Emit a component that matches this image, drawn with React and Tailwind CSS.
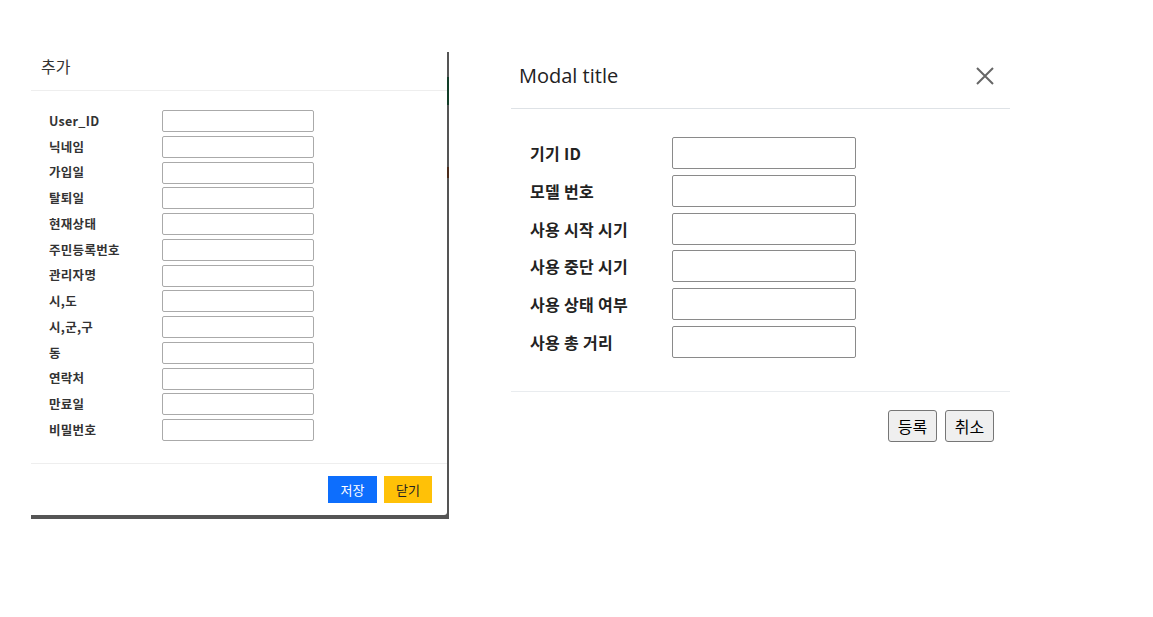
import React from "react";

const leftLabels = ["User_ID","닉네임","가입일","탈퇴일","현재상태","주민등록번호","관리자명","시,도","시,군,구","동","연락처","만료일","비밀번호"];
const rightLabels = ["기기 ID","모델 번호","사용 시작 시기","사용 중단 시기","사용 상태 여부","사용 총 거리"];

const kr = { fontFamily: '"Noto Sans CJK KR", "Noto Sans", sans-serif' };

export default function App() {
  return (
    <div className="w-[1153px] h-[617px] bg-white flex items-start pl-[31px] pt-[46px] gap-[62px]" style={kr}>
      {/* Left modal */}
      <div className="mt-[6px] relative w-[418px] h-[467px] bg-[#555555] pr-[2px] pb-[4px]">
        <span className="absolute right-0 top-[25px] w-[2px] h-[28px] bg-[#123d28]" />
        <span className="absolute right-0 top-[115px] w-[2px] h-[11px] bg-[#4a2c1c]" />
        <div className="w-[416px] h-[463px] bg-white rounded-br-[3px] flex flex-col">
          <div className="h-[39px] border-b border-[#eeeeee] pl-[10px] flex items-center pb-[11px]">
            <span className="text-[16px] text-[#333333] leading-none">추가</span>
          </div>
          <div className="pt-[19px] pl-[18px] flex flex-col gap-[3.75px] flex-1">
            {leftLabels.map((l) => (
              <div key={l} className="flex items-center h-[22px]">
                <span className="w-[113px] text-[12.5px] font-bold text-[#333333] leading-none tracking-[0.3px]">{l}</span>
                <div className="w-[152px] h-[22px] border border-[#aaaaaa] rounded-[2px]" />
              </div>
            ))}
          </div>
          <div className="border-t border-[#eeeeee] h-[52px] flex items-center justify-end pr-[15px] gap-[7px]">
            <div className="w-[49px] h-[27px] bg-[#0d6efd] text-white text-[13px] flex items-center justify-center">저장</div>
            <div className="w-[48px] h-[27px] bg-[#ffc107] text-[#222222] text-[13px] flex items-center justify-center">닫기</div>
          </div>
        </div>
      </div>

      {/* Right modal */}
      <div className="w-[499px] bg-white flex flex-col">
        <div className="h-[63px] border-b border-[#dee2e6] flex items-center justify-between pl-[8px] pr-[16px] pb-[3px]">
          <span className="text-[20px] text-[#222222] leading-none" style={{ fontFamily: '"Open Sans", "Noto Sans", sans-serif' }}>Modal title</span>
          <svg width="18" height="18" viewBox="0 0 18 18" className="mt-[1px]">
            <path d="M1 1 L17 17 M17 1 L1 17" stroke="#666666" strokeWidth="2" fill="none" />
          </svg>
        </div>
        <div className="pt-[28px] pb-[33px] pl-[19px] flex flex-col gap-[5.8px]">
          {rightLabels.map((l) => (
            <div key={l} className="flex items-center h-[32px]">
              <span className="w-[142px] text-[16px] font-bold text-[#222222] leading-none tracking-[0.3px]">{l}</span>
              <div className="w-[184px] h-[32px] border border-[#8a8a8a] rounded-[2px]" />
            </div>
          ))}
        </div>
        <div className="border-t border-[#e9ecef] pt-[18px] pb-[15px] pr-[16px] flex justify-end gap-[8px]">
          <div className="w-[49px] h-[32px] bg-[#efefef] border border-[#767676] rounded-[3px] text-[16px] text-black flex items-center justify-center">등록</div>
          <div className="w-[49px] h-[32px] bg-[#efefef] border border-[#767676] rounded-[3px] text-[16px] text-black flex items-center justify-center">취소</div>
        </div>
      </div>
    </div>
  );
}
